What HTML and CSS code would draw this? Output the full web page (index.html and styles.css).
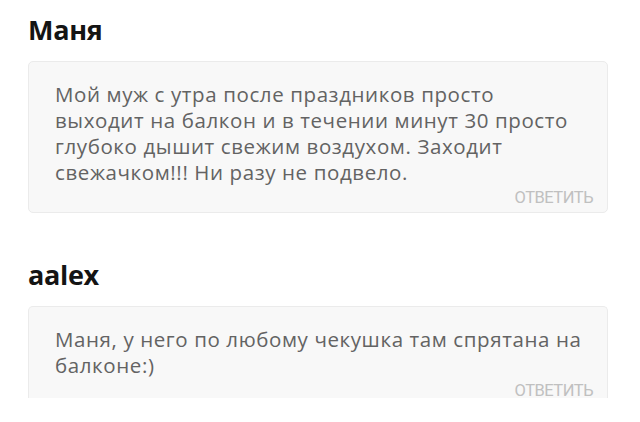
FILE: index.html
```html
<!DOCTYPE html>
<html lang="ru">
<head>
<meta charset="utf-8">
<link rel="stylesheet" href="styles.css">
</head>
<body>
<div class="page">
  <section class="comment">
    <h2 class="author">Маня</h2>
    <div class="card">
      <p class="text">Мой муж с утра после праздников просто<br>выходит на балкон и в течении минут 30 просто<br>глубоко дышит свежим воздухом. Заходит<br>свежачком!!! Ни разу не подвело.</p>
      <div class="actions"><span class="reply">ОТВЕТИТЬ</span></div>
    </div>
  </section>
  <section class="comment second">
    <h2 class="author">aalex</h2>
    <div class="card cut">
      <p class="text">Маня, у него по любому чекушка там спрятана на<br>балконе:)</p>
      <div class="actions"><span class="reply">ОТВЕТИТЬ</span></div>
    </div>
  </section>
</div>
</body>
</html>
```
FILE: styles.css
```css
html, body {
  margin: 0;
  padding: 0;
  background: #ffffff;
}
.page {
  width: 640px;
  height: 422px;
  overflow: hidden;
  padding: 0 32px 0 28px;
  box-sizing: border-box;
  font-family: "Open Sans", "Noto Sans", sans-serif;
}
.comment {
  display: flex;
  flex-direction: column;
}
.author {
  margin: 12px 0 0 0;
  font-size: 27px;
  line-height: 36px;
  font-weight: 700;
  color: #141414;
  letter-spacing: -0.3px;
}
.second .author {
  margin-top: 44px;
}
.card {
  margin-top: 13px;
  background: #f8f8f8;
  border: 1px solid #ebebeb;
  border-radius: 5px;
  padding: 19px 14px 6px 26px;
}
.text {
  margin: 0;
  font-size: 20.5px;
  line-height: 26px;
  letter-spacing: 0.6px;
  color: #636363;
}
.actions {
  display: flex;
  justify-content: flex-end;
  margin-top: 4px;
}
.reply {
  font-family: Roboto, "Liberation Sans", sans-serif;
  font-size: 16.5px;
  line-height: 17px;
  color: #c0c0c0;
  letter-spacing: -0.5px;
}
.card.cut {
  border-bottom: none;
  border-bottom-left-radius: 0;
  border-bottom-right-radius: 0;
  height: 92px;
  padding-bottom: 0;
  box-sizing: border-box;
}
```
